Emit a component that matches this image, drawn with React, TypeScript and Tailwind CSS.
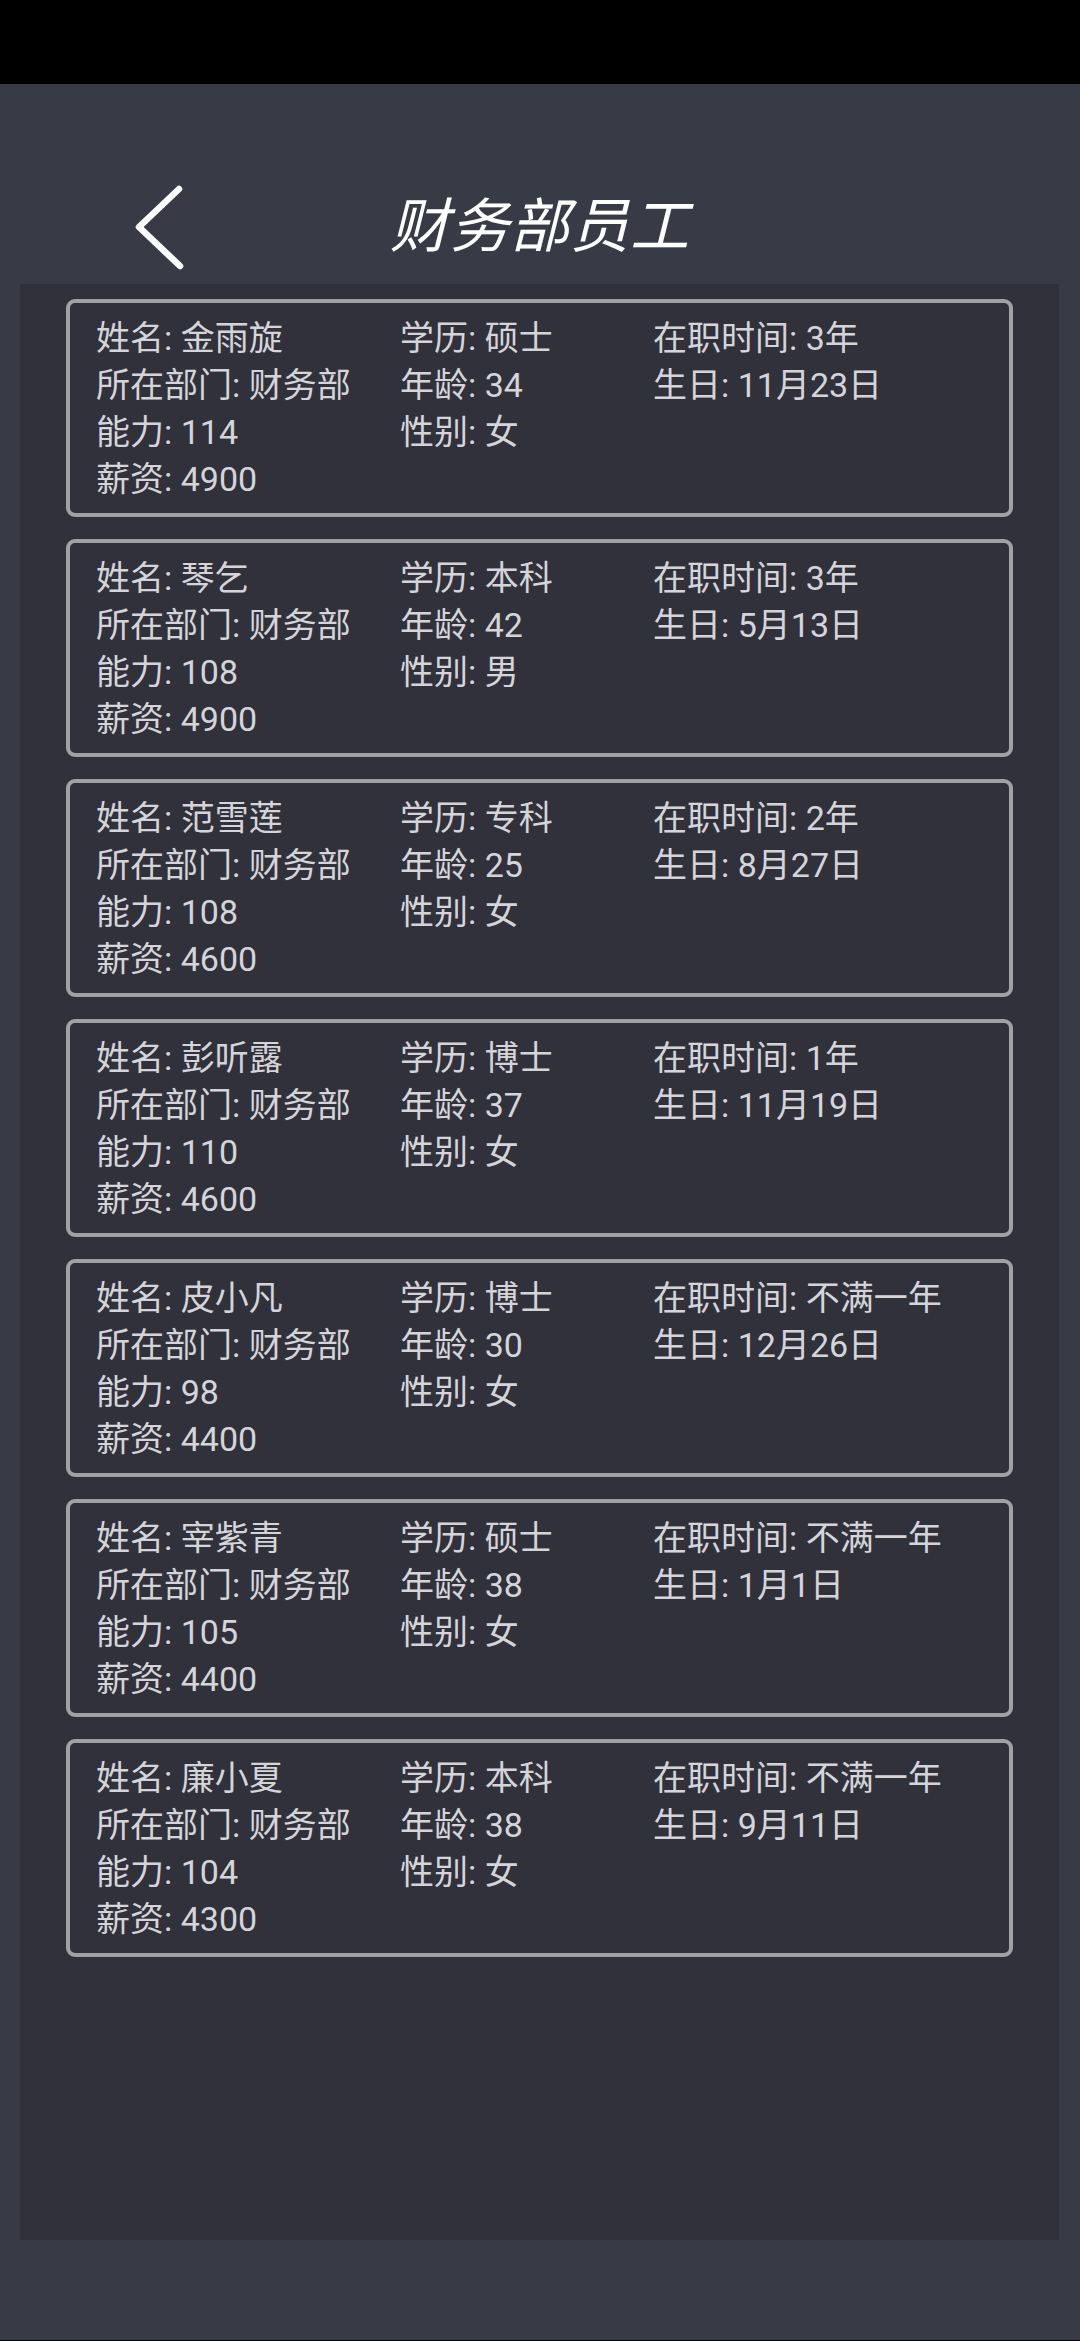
import React from 'react';

interface Employee {
  name: string;
  edu: string;
  tenure: string;
  age: number;
  birthday: string;
  ability: number;
  gender: string;
  salary: number;
}

const EMPLOYEES: Employee[] = [
  { name: '金雨旋', edu: '硕士', tenure: '3年', age: 34, birthday: '11月23日', ability: 114, gender: '女', salary: 4900 },
  { name: '琴乞', edu: '本科', tenure: '3年', age: 42, birthday: '5月13日', ability: 108, gender: '男', salary: 4900 },
  { name: '范雪莲', edu: '专科', tenure: '2年', age: 25, birthday: '8月27日', ability: 108, gender: '女', salary: 4600 },
  { name: '彭听露', edu: '博士', tenure: '1年', age: 37, birthday: '11月19日', ability: 110, gender: '女', salary: 4600 },
  { name: '皮小凡', edu: '博士', tenure: '不满一年', age: 30, birthday: '12月26日', ability: 98, gender: '女', salary: 4400 },
  { name: '宰紫青', edu: '硕士', tenure: '不满一年', age: 38, birthday: '1月1日', ability: 105, gender: '女', salary: 4400 },
  { name: '廉小夏', edu: '本科', tenure: '不满一年', age: 38, birthday: '9月11日', ability: 104, gender: '女', salary: 4300 },
];

const FONT = 'font-["Roboto","Noto_Sans_CJK_SC",sans-serif]';

function EmployeeCard({ e }: { e: Employee }) {
  // 3 columns x 4 rows, blanks keep the grid aligned
  const cells = [
    `姓名: ${e.name}`, `学历: ${e.edu}`, `在职时间: ${e.tenure}`,
    '所在部门: 财务部', `年龄: ${e.age}`, `生日: ${e.birthday}`,
    `能力: ${e.ability}`, `性别: ${e.gender}`, '',
    `薪资: ${e.salary}`, '', '',
  ];
  return (
    <div className="h-[218px] border-4 border-[#a1a1a5] rounded-[9px] bg-[#31313c] pl-[26px] pt-[12px]">
      <div className="grid grid-cols-[304px_253px_1fr] text-[34px] leading-[47px] text-[#d5d5d9] whitespace-nowrap">
        {cells.map((c, i) => (
          <span key={i} className="h-[47px]">{c}</span>
        ))}
      </div>
    </div>
  );
}

export default function App() {
  return (
    <div className={`min-h-[2341px] bg-[#383b46] flex flex-col ${FONT}`}>
      <div className="h-[84px] bg-black" />

      <div className="h-[200px] relative flex items-center justify-center pt-[84px]">
        <svg
          className="absolute left-[132px] top-[98px]"
          width="56"
          height="92"
          viewBox="0 0 56 92"
          fill="none"
          stroke="white"
          strokeWidth="6.5"
          strokeLinecap="round"
          strokeLinejoin="round"
        >
          <path d="M47 7 L7 45 L48 84" />
        </svg>
        <h1 className="text-[59px] leading-none italic text-white tracking-[1px]">财务部员工</h1>
      </div>

      <div className="mx-[20px] w-[1039px] h-[1956px] bg-[#31313c] pt-[15px] px-[46px] flex flex-col gap-[22px]">
        {EMPLOYEES.map((e) => (
          <EmployeeCard key={e.name} e={e} />
        ))}
      </div>

      <div className="flex-1" />
      <div className="h-[1px] bg-black" />
    </div>
  );
}
